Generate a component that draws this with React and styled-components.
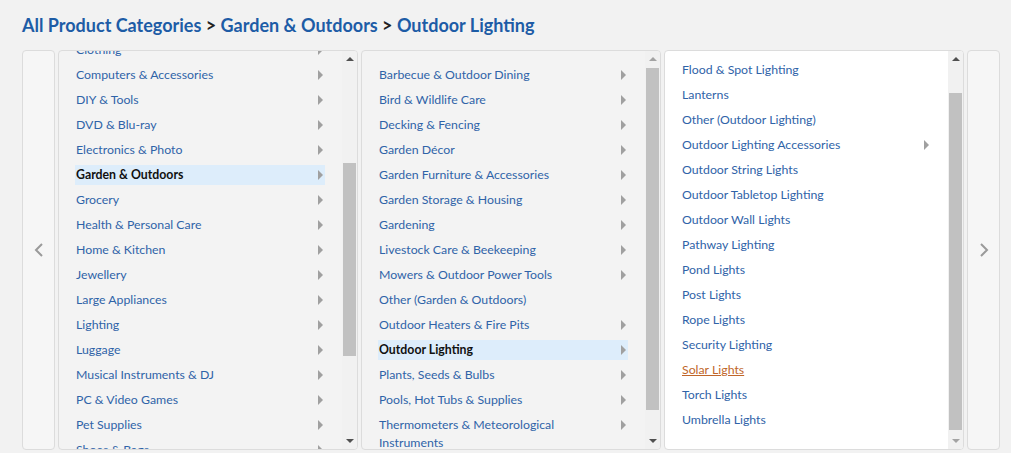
import styled, { createGlobalStyle } from "styled-components";

const GlobalStyle = createGlobalStyle`
  body {
    margin: 0;
    background: #f2f2f2;
    font-family: Lato, "Liberation Sans", Arial, sans-serif;
  }
`

const Page = styled.div`
  padding: 13px 22px 0 22px;
  width: 1011px;
  height: 453px;
  box-sizing: border-box;
  overflow: hidden;
`
const Breadcrumb = styled.h1`
  margin: 0;
  font-size: 18px;
  line-height: 24px;
  font-weight: 700;
  color: #1d5ca6;
`
const Sep = styled.span`
  color: #222;
`
const Browser = styled.div`
  display: flex;
  gap: 3px;
  margin-top: 13px;
  height: 400px;
`
const NavButton = styled.div`
  width: 33px;
  flex-shrink: 0;
  box-sizing: border-box;
  border: 1px solid #dcdcdc;
  border-radius: 4px;
  background: #f6f6f6;
  display: flex;
  align-items: center;
  justify-content: center;
`
const Column = styled.div`
  width: 300px;
  flex-shrink: 0;
  box-sizing: border-box;
  border: 1px solid #dcdcdc;
  border-radius: 4px;
  background: ${(p) => (p.$white ? "#fff" : "#f3f3f3")};
  display: flex;
  overflow: hidden;
`
const ListArea = styled.div`
  flex: 1;
  overflow: hidden;
  display: flex;
  flex-direction: column;
  justify-content: ${(p) => (p.$bottom ? "flex-end" : "flex-start")};
`
const List = styled.ul`
  list-style: none;
  margin: ${(p) => p.$offset}px 0 0 0;
  padding: ${(p) => (p.$bottom ? "0 17px 14px 16px" : "14px 17px 0 16px")};
  flex-shrink: 0;
`
const Row = styled.li`
  min-height: 20px;
  margin-bottom: 5px;
  padding: 1px 0 1px 1px;
  box-sizing: border-box;
  display: flex;
  align-items: flex-start;
  background: ${(p) => (p.$selected ? "#ddedfb" : "transparent")};
`
const Label = styled.span`
  flex: 1;
  padding-right: 22px;
  font-size: 12.3px;
  line-height: 18px;
  font-weight: ${(p) => (p.$selected ? 700 : 400)};
  color: ${(p) => (p.$selected ? "#111" : p.$hover ? "#c0662a" : "#2f63a8")};
  text-decoration: ${(p) => (p.$hover ? "underline" : "none")};
`
const Arrow = styled.span`
  width: 0;
  height: 0;
  margin: 4px 2px 0 0;
  border-left: 5px solid #a0a0a0;
  border-top: 5px solid transparent;
  border-bottom: 5px solid transparent;
`
const Scrollbar = styled.div`
  width: 15px;
  flex-shrink: 0;
  background: #f1f1f1;
  display: flex;
  flex-direction: column;
`
const ScrollButton = styled.div`
  height: 16px;
  display: flex;
  align-items: center;
  justify-content: center;
`
const UpTri = styled.span`
  width: 0;
  height: 0;
  border-left: 4px solid transparent;
  border-right: 4px solid transparent;
  border-bottom: 4px solid ${(p) => (p.$disabled ? "#a3a3a3" : "#505050")};
`
const DownTri = styled.span`
  width: 0;
  height: 0;
  border-left: 4px solid transparent;
  border-right: 4px solid transparent;
  border-top: 4px solid ${(p) => (p.$disabled ? "#a3a3a3" : "#505050")};
`
const Track = styled.div`
  flex: 1;
`
const Thumb = styled.div`
  margin: ${(p) => p.$top}px 1px 0 1px;
  height: ${(p) => p.$height}px;
  background: #c1c1c1;
`

const departments = [
  "Clothing",
  "Computers & Accessories",
  "DIY & Tools",
  "DVD & Blu-ray",
  "Electronics & Photo",
  "Garden & Outdoors",
  "Grocery",
  "Health & Personal Care",
  "Home & Kitchen",
  "Jewellery",
  "Large Appliances",
  "Lighting",
  "Luggage",
  "Musical Instruments & DJ",
  "PC & Video Games",
  "Pet Supplies",
  "Shoes & Bags",
  "Sports & Outdoors",
].map((name) => ({ name, more: true, selected: name === "Garden & Outdoors" }))

const garden = [
  ["Barbecue & Outdoor Dining", true],
  ["Bird & Wildlife Care", true],
  ["Decking & Fencing", true],
  ["Garden Décor", true],
  ["Garden Furniture & Accessories", true],
  ["Garden Storage & Housing", true],
  ["Gardening", true],
  ["Livestock Care & Beekeeping", true],
  ["Mowers & Outdoor Power Tools", true],
  ["Other (Garden & Outdoors)", false],
  ["Outdoor Heaters & Fire Pits", true],
  ["Outdoor Lighting", true],
  ["Plants, Seeds & Bulbs", true],
  ["Pools, Hot Tubs & Supplies", true],
  ["Thermometers & Meteorological Instruments", true],
].map(([name, more]) => ({ name, more, selected: name === "Outdoor Lighting" }))

const lighting = [
  "Festoon & Fairy Lighting",
  "Flood & Spot Lighting",
  "Lanterns",
  "Other (Outdoor Lighting)",
  "Outdoor Lighting Accessories",
  "Outdoor String Lights",
  "Outdoor Tabletop Lighting",
  "Outdoor Wall Lights",
  "Pathway Lighting",
  "Pond Lights",
  "Post Lights",
  "Rope Lights",
  "Security Lighting",
  "Solar Lights",
  "Torch Lights",
  "Umbrella Lights",
].map((name) => ({
  name,
  more: name === "Outdoor Lighting Accessories",
  hover: name === "Solar Lights",
}))

const Chevron = ({ dir }) => (
  <svg width="10" height="16" viewBox="0 0 10 16">
    <path
      d={dir === "left" ? "M8 2 L2 8 L8 14" : "M2 2 L8 8 L2 14"}
      fill="none"
      stroke="#9a9a9a"
      strokeWidth="2"
    />
  </svg>
)

const CategoryColumn = ({ items, offset = 0, bottom, white, thumb, upDisabled, downDisabled }) => (
  <Column $white={white}>
    <ListArea $bottom={bottom}>
      <List $offset={offset} $bottom={bottom}>
        {items.map((item) => (
          <Row key={item.name} $selected={item.selected}>
            <Label $selected={item.selected} $hover={item.hover}>
              {item.name}
            </Label>
            {item.more && <Arrow />}
          </Row>
        ))}
      </List>
    </ListArea>
    <Scrollbar>
      <ScrollButton>
        <UpTri $disabled={upDisabled} />
      </ScrollButton>
      <Track>
        <Thumb $top={thumb[0]} $height={thumb[1]} />
      </Track>
      <ScrollButton>
        <DownTri $disabled={downDisabled} />
      </ScrollButton>
    </Scrollbar>
  </Column>
)

const App = () => {
  return (
    <Page>
      <GlobalStyle />
      <Breadcrumb>
        All Product Categories <Sep>&gt;</Sep> Garden &amp; Outdoors <Sep>&gt;</Sep> Outdoor Lighting
      </Breadcrumb>
      <Browser>
        <NavButton>
          <Chevron dir="left" />
        </NavButton>
        <CategoryColumn items={departments} offset={-25} thumb={[96, 193]} />
        <CategoryColumn items={garden} thumb={[1, 342]} upDisabled />
        <CategoryColumn items={lighting} bottom white thumb={[26, 337]} downDisabled />
        <NavButton>
          <Chevron dir="right" />
        </NavButton>
      </Browser>
    </Page>
  )
}

export default App
